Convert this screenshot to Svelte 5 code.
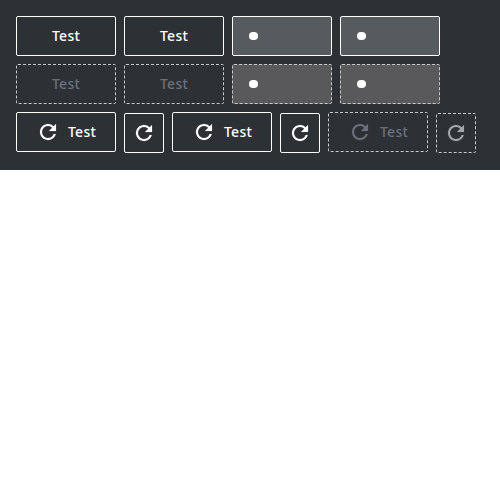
<script>
  const rows = [
    [
      { kind: 'text' },
      { kind: 'text' },
      { kind: 'loading' },
      { kind: 'loading' }
    ],
    [
      { kind: 'text', disabled: true },
      { kind: 'text', disabled: true },
      { kind: 'loading', disabled: true },
      { kind: 'loading', disabled: true }
    ],
    [
      { kind: 'both' },
      { kind: 'icon' },
      { kind: 'both' },
      { kind: 'icon' },
      { kind: 'both', disabled: true },
      { kind: 'icon', disabled: true }
    ]
  ];
</script>

<main>
  {#each rows as row}
    <div class="row">
      {#each row as button}
        <button class={button.kind} disabled={button.disabled}>
          {#if button.kind === 'loading'}
            <span class="dot"></span>
          {/if}
          {#if button.kind === 'icon' || button.kind === 'both'}
            <svg viewBox="0 0 24 24" width="24" height="24" aria-hidden="true">
              <path d="M17.65 6.35A7.958 7.958 0 0 0 12 4c-4.42 0-7.99 3.58-7.99 8s3.57 8 7.99 8c3.73 0 6.84-2.55 7.73-6h-2.08A5.99 5.99 0 0 1 12 18c-3.31 0-6-2.69-6-6s2.69-6 6-6c1.66 0 3.14.69 4.22 1.78L13 11h7V4l-2.35 2.35z" />
            </svg>
          {/if}
          {#if button.kind === 'text' || button.kind === 'both'}
            <span>Test</span>
          {/if}
        </button>
      {/each}
    </div>
  {/each}
</main>

<style>
  :global(body) {
    margin: 0;
    background: #fff;
  }
  main {
    box-sizing: border-box;
    height: 170px;
    padding: 16px;
    display: flex;
    flex-direction: column;
    gap: 8px;
    background: #2d3035;
  }
  .row {
    display: flex;
    align-items: flex-start;
    gap: 8px;
    height: 40px;
  }
  button {
    box-sizing: border-box;
    flex: none;
    display: flex;
    align-items: center;
    justify-content: center;
    gap: 8px;
    width: 100px;
    height: 40px;
    margin: 0;
    padding: 0 19px;
    border: 1px solid #fff;
    border-radius: 2px;
    background: transparent;
    color: #fff;
    font: 500 14px/20px 'Noto Sans', sans-serif;
    letter-spacing: 0.25px;
  }
  button:disabled {
    border: 1px dashed #c8c9cb;
    color: #6a717d;
  }
  .icon {
    width: 40px;
    padding: 0;
    margin-top: 1px;
  }
  .icon:disabled {
    color: #a3a7ac;
  }
  .loading {
    justify-content: flex-start;
    padding: 0 16px;
    background: #575a5e;
  }
  .loading:disabled {
    background: #59595c;
  }
  .dot {
    width: 9px;
    height: 8px;
    border-radius: 4px;
    background: #fff;
  }
  svg {
    display: block;
    flex: none;
    fill: currentColor;
    stroke: currentColor;
    stroke-width: 0.15;
  }
</style>
